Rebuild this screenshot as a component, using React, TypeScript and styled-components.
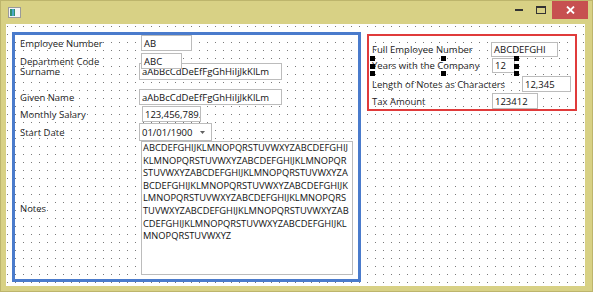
import styled, { createGlobalStyle } from "styled-components";

const Global = createGlobalStyle`
  html, body { margin: 0; padding: 0; background: #d8d185; }
  body { font-family: "Open Sans", "Noto Sans", sans-serif; }
`;

const Window = styled.div`
  width: 593px;
  height: 292px;
  box-sizing: border-box;
  background: #d8d185;
  border: 1px solid #bdb56c;
  display: flex;
  flex-direction: column;
`;

const TitleBar = styled.div`
  height: 23px;
  display: flex;
  align-items: flex-start;
`;

const AppIcon = styled.svg`
  margin: 6px 0 0 7px;
`;

const Controls = styled.div`
  margin-left: auto;
  margin-right: 4px;
  display: flex;
`;

const CtrlButton = styled.div<{ $w: number; $bg?: string }>`
  width: ${(p) => p.$w}px;
  height: 18px;
  background: ${(p) => p.$bg || "transparent"};
  display: flex;
  align-items: center;
  justify-content: center;
`;

const Client = styled.div`
  margin: 0 7px 5px 5px;
  flex: 1;
  background-color: #ffffff;
  background-image: conic-gradient(at 1px 1px, transparent 75%, #7a7a7a 0);
  background-size: 8px 8px;
  background-position: 1px 2px;
  padding: 8px 0 0 6px;
  display: flex;
  align-items: flex-start;
  gap: 6px;
  box-sizing: border-box;
`;

const Panel = styled.div<{ $color: string; $bw: number; $w: number; $h: number; $mt?: number }>`
  box-sizing: border-box;
  width: ${(p) => p.$w}px;
  height: ${(p) => p.$h}px;
  margin-top: ${(p) => p.$mt || 0}px;
  border: ${(p) => p.$bw}px solid ${(p) => p.$color};
  display: flex;
  flex-direction: column;
`;

const Row = styled.div<{ $h: number; $mt?: number; $top?: boolean }>`
  position: relative;
  z-index: ${(p) => (p.$top ? 1 : 0)};
  height: ${(p) => p.$h}px;
  margin-top: ${(p) => p.$mt || 0}px;
  display: flex;
  align-items: center;
  flex-shrink: 0;
`;

const Label = styled.div<{ $pl: number; $w: number }>`
  box-sizing: border-box;
  flex: 0 0 ${(p) => p.$w}px;
  min-width: 0;
  padding-left: ${(p) => p.$pl}px;
  font-size: 9.5px;
  color: #1e1e1e;
  white-space: nowrap;
`;

const TextBox = styled.div<{ $w: number; $ml?: number }>`
  box-sizing: border-box;
  width: ${(p) => p.$w}px;
  height: 100%;
  margin-left: ${(p) => p.$ml || 0}px;
  flex-shrink: 0;
  background: #ffffff;
  border: 1px solid #bcbcbc;
  padding: 0 1px 0 2px;
  display: flex;
  align-items: center;
  font-size: 9.5px;
  color: #111111;
  white-space: nowrap;
  overflow: hidden;
`;

const ComboBox = styled(TextBox)`
  justify-content: space-between;
  padding-right: 6px;
`;

const NotesBox = styled(TextBox)`
  flex-direction: column;
  align-items: flex-start;
  justify-content: flex-start;
  padding: 0 1px;
  font-size: 9.3px;
  line-height: 12.6px;
`;

const Handle = styled.div`
  position: absolute;
  width: 5px;
  height: 5px;
  background: #000000;
`;

const notesLines = [
  "ABCDEFGHIJKLMNOPQRSTUVWXYZABCDEFGHIJ",
  "KLMNOPQRSTUVWXYZABCDEFGHIJKLMNOPQR",
  "STUVWXYZABCDEFGHIJKLMNOPQRSTUVWXYZA",
  "BCDEFGHIJKLMNOPQRSTUVWXYZABCDEFGHIJK",
  "LMNOPQRSTUVWXYZABCDEFGHIJKLMNOPQRS",
  "TUVWXYZABCDEFGHIJKLMNOPQRSTUVWXYZAB",
  "CDEFGHIJKLMNOPQRSTUVWXYZABCDEFGHIJKL",
  "MNOPQRSTUVWXYZ",
];

const handles = [
  [3, 0], [3, 8], [3, 15],
  [74, 0], [74, 15],
  [147, 0], [147, 8], [147, 15],
];

export default function App() {
  return (
    <>
      <Global />
      <Window>
        <TitleBar>
          <AppIcon width="13" height="11" viewBox="0 0 13 11">
            <rect x="0.5" y="0.5" width="12" height="10" fill="#f4f4f4" stroke="#9a9a9a" />
            <rect x="2" y="2" width="5" height="7" fill="#2f8f6a" />
            <rect x="4" y="2" width="2" height="7" fill="#4aa7c9" />
          </AppIcon>
          <Controls>
            <CtrlButton $w={22}>
              <svg width="8" height="2"><rect width="8" height="2" fill="#333" /></svg>
            </CtrlButton>
            <CtrlButton $w={22}>
              <svg width="10" height="8" viewBox="0 0 10 8">
                <rect x="0.5" y="0.5" width="9" height="7" fill="none" stroke="#333" />
                <rect x="0" y="0" width="10" height="2" fill="#333" />
              </svg>
            </CtrlButton>
            <CtrlButton $w={36} $bg="#c75050">
              <svg width="9" height="8" viewBox="0 0 9 8">
                <path d="M1 0.5 L8 7.5 M8 0.5 L1 7.5" stroke="#ffffff" strokeWidth="1.8" />
              </svg>
            </CtrlButton>
          </Controls>
        </TitleBar>
        <Client>
          <Panel $color="#4a7bcc" $bw={3} $w={349} $h={250}>
            <Row $h={16}>
              <Label $pl={5} $w={124}>Employee Number</Label>
              <TextBox $w={51} $ml={2}>AB</TextBox>
            </Row>
            <Row $h={16} $mt={2} $top>
              <Label $pl={5} $w={124}>Department Code</Label>
              <TextBox $w={41} $ml={2}>ABC</TextBox>
            </Row>
            <Row $h={17} $mt={-6}>
              <Label $pl={5} $w={124}>Surname</Label>
              <TextBox $w={143}>aAbBcCdDeEfFgGhHiIjJkKlLm</TextBox>
            </Row>
            <Row $h={16} $mt={9}>
              <Label $pl={5} $w={124}>Given Name</Label>
              <TextBox $w={143}>aAbBcCdDeEfFgGhHiIjJkKlLm</TextBox>
            </Row>
            <Row $h={16} $mt={1}>
              <Label $pl={5} $w={124}>Monthly Salary</Label>
              <TextBox $w={59} $ml={3}>123,456,789.12</TextBox>
            </Row>
            <Row $h={18} $mt={1}>
              <Label $pl={5} $w={124}>Start Date</Label>
              <ComboBox $w={73}>
                01/01/1900
                <svg width="5" height="3" viewBox="0 0 5 3">
                  <path d="M0 0 L5 0 L2.5 3 Z" fill="#606060" />
                </svg>
              </ComboBox>
            </Row>
            <Row $h={134}>
              <Label $pl={5} $w={124}>Notes</Label>
              <NotesBox $w={212} $ml={2}>
                {notesLines.map((l, i) => (
                  <div key={i}>{l}</div>
                ))}
              </NotesBox>
            </Row>
          </Panel>
          <Panel $color="#e03b3b" $bw={2} $w={210} $h={77} $mt={2}>
            <Row $h={15} $mt={6}>
              <Label $pl={3} $w={122}>Full Employee Number</Label>
              <TextBox $w={67}>ABCDEFGHI</TextBox>
            </Row>
            <Row $h={15} $mt={1}>
              <Label $pl={3} $w={122}>Years with the Company</Label>
              <TextBox $w={23} $ml={1}>12</TextBox>
              {handles.map(([x, y], i) => (
                <Handle key={i} style={{ left: x - 2, top: y - 2 }} />
              ))}
            </Row>
            <Row $h={16} $mt={3}>
              <Label $pl={3} $w={122}>Length of Notes as Characters</Label>
              <TextBox $w={49} $ml={31}>12,345</TextBox>
            </Row>
            <Row $h={16} $mt={1}>
              <Label $pl={3} $w={122}>Tax Amount</Label>
              <TextBox $w={46} $ml={1}>123412</TextBox>
            </Row>
          </Panel>
        </Client>
      </Window>
    </>
  );
}
